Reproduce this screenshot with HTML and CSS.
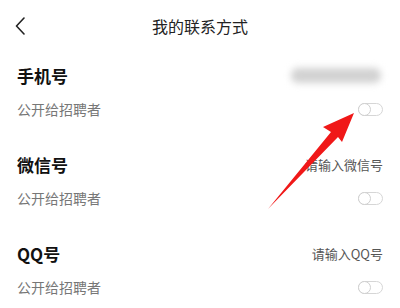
FILE: index.html
```html
<!DOCTYPE html>
<html lang="zh">
<head>
<meta charset="utf-8">
<link rel="stylesheet" href="styles.css">
</head>
<body>
<div class="page">
  <header class="header">
    <svg class="back" width="10" height="18" viewBox="0 0 10 18"><path d="M9 1 L1.5 9 L9 17" fill="none" stroke="#222" stroke-width="1.6" stroke-linecap="round" stroke-linejoin="round"/></svg>
    <div class="title">我的联系方式</div>
  </header>
  <main class="list">
    <section class="item">
      <div class="row">
        <span class="label">手机号</span>
        <span class="blur"></span>
      </div>
      <div class="row">
        <span class="sub">公开给招聘者</span>
        <span class="toggle"><span class="knob"></span></span>
      </div>
    </section>
    <section class="item">
      <div class="row">
        <span class="label">微信号</span>
        <span class="ph">请输入微信号</span>
      </div>
      <div class="row">
        <span class="sub">公开给招聘者</span>
        <span class="toggle"><span class="knob"></span></span>
      </div>
    </section>
    <section class="item">
      <div class="row">
        <span class="label">QQ号</span>
        <span class="ph">请输入QQ号</span>
      </div>
      <div class="row">
        <span class="sub">公开给招聘者</span>
        <span class="toggle"><span class="knob"></span></span>
      </div>
    </section>
  </main>
  <svg class="arrow" width="400" height="308" viewBox="0 0 400 308">
    <path d="M354 113 L323 127 L331 132 L268 209 L338 137 L342 142 Z" fill="#f01818"/>
  </svg>
</div>
</body>
</html>
```

FILE: styles.css
```css
* { box-sizing: border-box; }
html, body { margin: 0; padding: 0; background: #fff; }
body {
  font-family: "Noto Sans CJK SC", "Noto Sans", sans-serif;
  width: 400px;
  height: 308px;
  overflow: hidden;
}
.page { position: relative; width: 400px; height: 308px; }
.header {
  position: relative;
  height: 52px;
  display: flex;
  align-items: center;
  justify-content: center;
}
.back { position: absolute; left: 15px; top: 17px; }
.title { font-size: 16px; color: #222; }
.list { padding: 6px 17px 0 17px; }
.item { margin-bottom: 21px; }
.row {
  height: 34px;
  display: flex;
  align-items: center;
  justify-content: space-between;
}
.label { font-size: 17px; font-weight: bold; color: #111; }
.sub { font-size: 14px; color: #777; }
.ph { font-size: 13px; color: #555; }
.blur {
  width: 90px;
  height: 15px;
  margin-right: 2px;
  background: #d2d2d2;
  border-radius: 7px;
  filter: blur(3.5px);
}
.toggle {
  width: 25px;
  height: 13px;
  border: 1px solid #d6d6d6;
  border-radius: 7px;
  position: relative;
  background: #fff;
}
.knob {
  position: absolute;
  left: -1px;
  top: -1px;
  width: 13px;
  height: 13px;
  border-radius: 50%;
  border: 1px solid #cfcfcf;
  background: #fff;
}
.arrow { position: absolute; left: 0; top: 0; pointer-events: none; }
```
